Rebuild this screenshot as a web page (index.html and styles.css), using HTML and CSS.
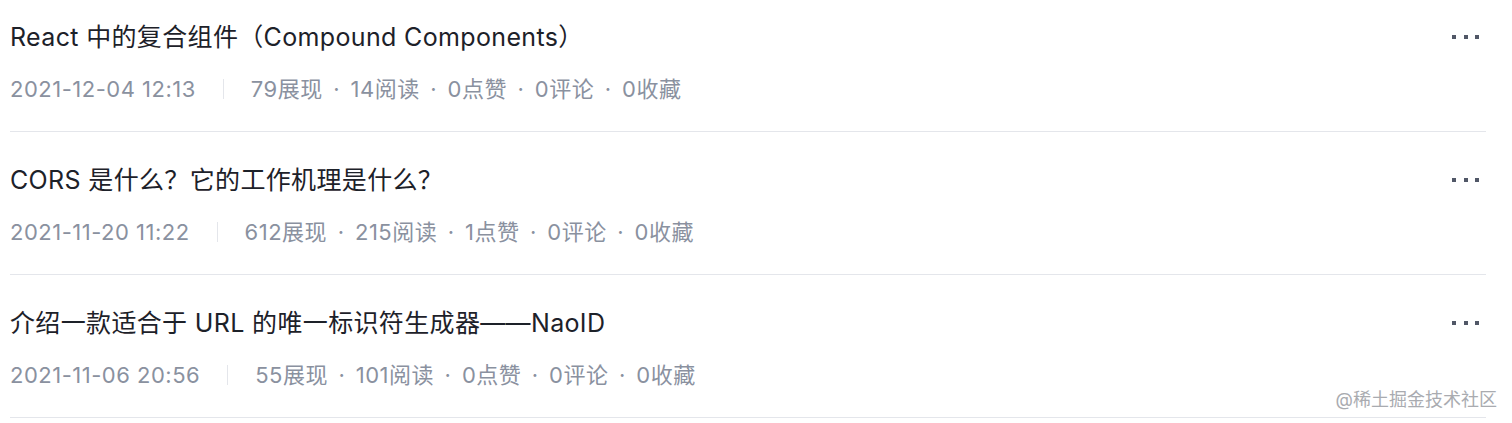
FILE: index.html
```html
<!DOCTYPE html>
<html lang="zh-CN">
<head>
<meta charset="utf-8">
<title>文章列表</title>
<link rel="stylesheet" href="styles.css">
</head>
<body>
<div class="list">
  <div class="item">
    <div class="title-row">
      <div class="title">React 中的复合组件（Compound Components）</div>
      <div class="more"><i></i><i></i><i></i></div>
    </div>
    <div class="meta">
      <span class="date">2021-12-04 12:13</span>
      <span class="divider"></span>
      <span class="stat">79展现</span><span class="sep">·</span><span class="stat">14阅读</span><span class="sep">·</span><span class="stat">0点赞</span><span class="sep">·</span><span class="stat">0评论</span><span class="sep">·</span><span class="stat">0收藏</span>
    </div>
  </div>
  <div class="item">
    <div class="title-row">
      <div class="title">CORS 是什么？它的工作机理是什么？</div>
      <div class="more"><i></i><i></i><i></i></div>
    </div>
    <div class="meta">
      <span class="date">2021-11-20 11:22</span>
      <span class="divider"></span>
      <span class="stat">612展现</span><span class="sep">·</span><span class="stat">215阅读</span><span class="sep">·</span><span class="stat">1点赞</span><span class="sep">·</span><span class="stat">0评论</span><span class="sep">·</span><span class="stat">0收藏</span>
    </div>
  </div>
  <div class="item">
    <div class="title-row">
      <div class="title">介绍一款适合于 URL 的唯一标识符生成器——NaoID</div>
      <div class="more"><i></i><i></i><i></i></div>
    </div>
    <div class="meta">
      <span class="date">2021-11-06 20:56</span>
      <span class="divider"></span>
      <span class="stat">55展现</span><span class="sep">·</span><span class="stat">101阅读</span><span class="sep">·</span><span class="stat">0点赞</span><span class="sep">·</span><span class="stat">0评论</span><span class="sep">·</span><span class="stat">0收藏</span>
    </div>
  </div>
</div>
<div class="watermark">@稀土掘金技术社区</div>
</body>
</html>
```
FILE: styles.css
```css
html, body {
  margin: 0;
  padding: 0;
  background: #ffffff;
}
body {
  font-family: Inter, "Noto Sans CJK SC", sans-serif;
  position: relative;
  height: 423px;
  overflow: hidden;
}
.list {
  padding: 0 26px 0 10px;
}
.item {
  padding: 30px 0 27px;
  border-bottom: 1px solid #e4e6eb;
}
.item:first-child {
  padding-top: 19px;
}
.title-row {
  display: flex;
  align-items: center;
  justify-content: space-between;
  height: 36px;
}
.title {
  font-size: 25px;
  letter-spacing: 0.35px;
  line-height: 36px;
  color: #1d2129;
  white-space: nowrap;
}
.more {
  display: flex;
  gap: 7.5px;
  margin-right: 7px;
  margin-top: -1px;
}
.more i {
  display: block;
  width: 4px;
  height: 4px;
  background: #515767;
}
.meta {
  display: flex;
  align-items: center;
  margin-top: 19px;
  height: 30px;
  font-size: 22px;
  letter-spacing: 0.5px;
  line-height: 30px;
  color: #8a919f;
  white-space: nowrap;
}
.divider {
  width: 1px;
  height: 20px;
  background: #e4e6eb;
  margin: 0 27px;
}
.sep {
  margin: 0 10.5px;
}
.watermark {
  position: absolute;
  right: 15px;
  bottom: 11px;
  font-size: 18px;
  line-height: 24px;
  color: #a9abb0;
}
```
